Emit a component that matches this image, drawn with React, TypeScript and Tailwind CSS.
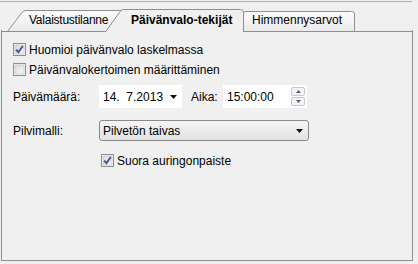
import React from 'react'

const FONT = "font-['Liberation_Sans',Arial,sans-serif]"

function CheckBox({ checked }: { checked: boolean }) {
  return (
    <svg viewBox="0 0 13 13" className="h-[13px] w-[13px] shrink-0" aria-hidden="true">
      <defs>
        <linearGradient id="cbg" x1="0" y1="0" x2="1" y2="1">
          <stop offset="0" stopColor="#d8d8d8" />
          <stop offset="1" stopColor="#fbfbfb" />
        </linearGradient>
      </defs>
      <rect x="0.5" y="0.5" width="12" height="12" fill="#fff" stroke="#8e8f8f" />
      <rect x="2" y="2" width="9" height="9" fill="url(#cbg)" stroke="#c4c4c4" strokeWidth="0.8" />
      {checked ? (
        <path d="M3.2 6.6 L5.4 9.2 L9.8 3" fill="none" stroke="#3e5597" strokeWidth="1.9" />
      ) : null}
    </svg>
  )
}

function Arrow() {
  return (
    <svg viewBox="0 0 7 4" className="h-[4px] w-[7px]" aria-hidden="true">
      <path d="M0 0 H7 L3.5 4 Z" fill="#111" />
    </svg>
  )
}

function SpinArrow({ up }: { up: boolean }) {
  return (
    <svg viewBox="0 0 5 3" className="h-[3px] w-[5px]" aria-hidden="true">
      <path d={up ? 'M0 3 H5 L2.5 0 Z' : 'M0 0 H5 L2.5 3 Z'} fill="#4d6185" />
    </svg>
  )
}

function TabOutlines() {
  return (
    <svg
      className="absolute left-0 top-0"
      width="418"
      height="30"
      viewBox="0 0 418 30"
      aria-hidden="true"
    >
      <defs>
        <linearGradient id="tabg" x1="0" y1="0" x2="0" y2="1">
          <stop offset="0" stopColor="#fbfbfb" />
          <stop offset="1" stopColor="#ebebeb" />
        </linearGradient>
      </defs>
      <path
        d="M7.5 29.5 L22 10.5 Q23.5 8.5 26 8.5 L124 8.5 L124 29.5"
        fill="url(#tabg)"
        stroke="#8e8f8f"
      />
      <path
        d="M243.5 29.5 L243.5 11.5 Q243.5 9.5 246 9.5 L351.5 9.5 Q354.5 9.5 354.5 12 L354.5 29.5"
        fill="url(#tabg)"
        stroke="#8e8f8f"
      />
      <path d="M1.5 29.5 H412.5" stroke="#8e8f8f" />
      <path
        d="M105.5 30 L120 9.5 Q121.5 7.5 124 7.5 L240.5 7.5 Q243.5 7.5 243.5 10.5 L243.5 30"
        fill="#f0f0f0"
        stroke="#8e8f8f"
      />
      <path d="M106.5 30 H242.5" stroke="#f0f0f0" strokeWidth="2" />
    </svg>
  )
}

export default function App() {
  return (
    <div className={`relative h-[264px] w-[418px] overflow-hidden bg-[#f0f0f0] text-[12px] text-black ${FONT}`}>
      <div className="mt-[1px] h-[1px] w-[412px] bg-[#b0b0b0]" />
      <div className="relative h-[28px]">
        <TabOutlines />
        <div className="relative flex h-[28px] items-center pt-[7px]">
          <span className="ml-[29px] w-[102px] tracking-[-0.25px]">Valaistustilanne</span>
          <span className="w-[121px] font-bold">Päivänvalo-tekijät</span>
          <span>Himmennysarvot</span>
        </div>
      </div>
      <div className="ml-[1px] h-[231px] w-[412px] border-x border-b border-[#8e8f8f] px-[11px] pt-[13px]">
        <div className="flex flex-col gap-[7px]">
          <label className="flex h-[13px] items-center gap-[3px]">
            <CheckBox checked />
            <span>Huomioi päivänvalo laskelmassa</span>
          </label>
          <label className="flex h-[13px] items-center gap-[3px]">
            <CheckBox checked={false} />
            <span>Päivänvalokertoimen määrittäminen</span>
          </label>
        </div>
        <div className="mt-[9px] flex h-[23px] items-center">
          <span className="w-[86px]">Päivämäärä:</span>
          <div className="flex h-[23px] w-[83px] items-center justify-between bg-white pl-[4px] pr-[5px]">
            <span className="whitespace-pre">14.  7.2013</span>
            <Arrow />
          </div>
          <span className="ml-[9px] w-[32px]">Aika:</span>
          <div className="flex h-[23px] w-[84px] items-center justify-between bg-white pl-[4px] pr-[2px]">
            <span>15:00:00</span>
            <div className="flex flex-col gap-[1px]">
              <div className="flex h-[9px] w-[14px] items-center justify-center rounded-[2px] border border-[#c9c9c9] bg-[#f4f4f4]">
                <SpinArrow up />
              </div>
              <div className="flex h-[9px] w-[14px] items-center justify-center rounded-[2px] border border-[#c9c9c9] bg-[#f4f4f4]">
                <SpinArrow up={false} />
              </div>
            </div>
          </div>
        </div>
        <div className="mt-[12px] flex h-[21px] items-center">
          <span className="w-[86px]">Pilvimalli:</span>
          <div className="flex h-[21px] w-[210px] items-center justify-between rounded-[3px] border border-[#8a8a8a] bg-gradient-to-b from-[#f5f5f5] to-[#e2e2e2] pl-[3px] pr-[5px]">
            <span>Pilvetön taivas</span>
            <Arrow />
          </div>
        </div>
        <label className="ml-[88px] mt-[13px] flex h-[13px] items-center gap-[3px]">
          <CheckBox checked />
          <span>Suora auringonpaiste</span>
        </label>
      </div>
    </div>
  )
}
